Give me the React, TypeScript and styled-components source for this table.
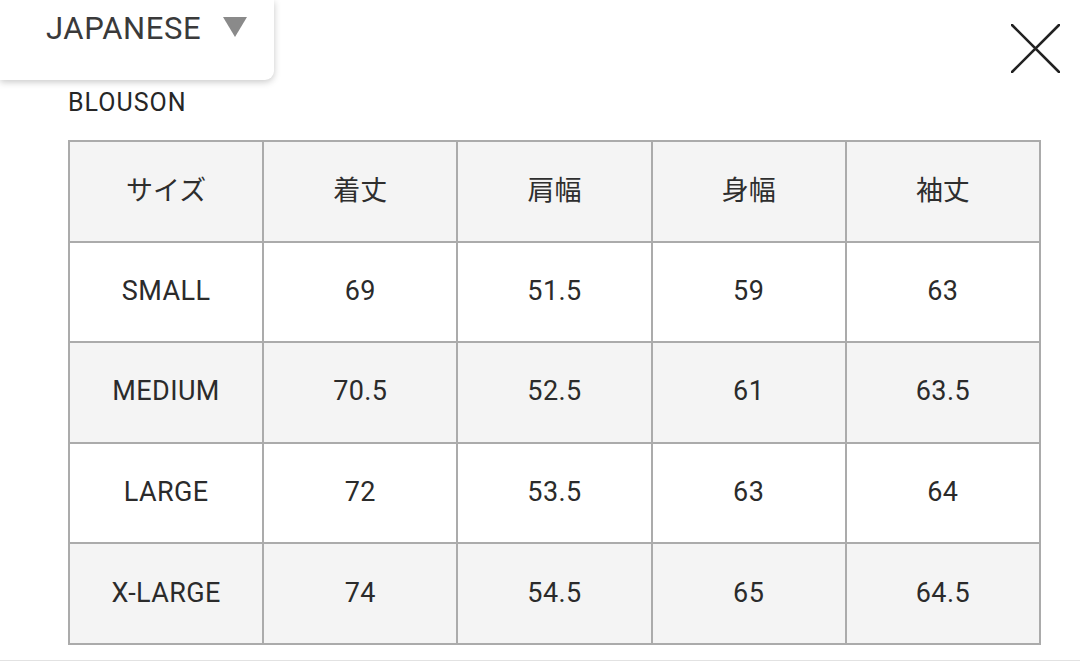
import React from "react";
import styled, { createGlobalStyle } from "styled-components";

const GlobalStyle = createGlobalStyle`
  html, body {
    margin: 0;
    padding: 0;
    background: #fff;
  }
  body {
    font-family: Roboto, "Noto Sans CJK JP", sans-serif;
    color: #333;
  }
`;

const headers = ["サイズ", "着丈", "肩幅", "身幅", "袖丈"];
const rows = [
  ["SMALL", "69", "51.5", "59", "63"],
  ["MEDIUM", "70.5", "52.5", "61", "63.5"],
  ["LARGE", "72", "53.5", "63", "64"],
  ["X-LARGE", "74", "54.5", "65", "64.5"],
];

export default function App() {
  return (
    <>
      <GlobalStyle />
      <Page>
        <TopBar>
          <LangSelect>
            <LangLabel>JAPANESE</LangLabel>
            <Caret />
          </LangSelect>
          <CloseButton aria-label="close">
            <svg width="49" height="49" viewBox="0 0 49 49">
              <path
                d="M1 1 L48 48 M48 1 L1 48"
                stroke="#222"
                strokeWidth="2.6"
                strokeLinecap="round"
              />
            </svg>
          </CloseButton>
        </TopBar>
        <Content>
          <Title>BLOUSON</Title>
          <SizeTable>
            <thead>
              <tr>
                {headers.map((h) => (
                  <HeadCell key={h}>{h}</HeadCell>
                ))}
              </tr>
            </thead>
            <tbody>
              {rows.map((r, i) => (
                <Row key={r[0]} $shaded={i % 2 === 1}>
                  {r.map((c, j) => (
                    <Cell key={j}>{c}</Cell>
                  ))}
                </Row>
              ))}
            </tbody>
          </SizeTable>
        </Content>
        <Divider />
      </Page>
    </>
  );
}

const Page = styled.div`
  width: 1080px;
  height: 661px;
  overflow: hidden;
`;

const TopBar = styled.div`
  display: flex;
  justify-content: space-between;
  align-items: flex-start;
`;

const LangSelect = styled.div`
  width: 274px;
  height: 80px;
  box-sizing: border-box;
  padding: 11px 0 0 46px;
  display: flex;
  align-items: flex-start;
  gap: 22px;
  background: #fff;
  border-radius: 0 0 9px 0;
  box-shadow: 0 2px 7px rgba(0, 0, 0, 0.22);
`;

const LangLabel = styled.span`
  font-size: 31px;
  line-height: 36px;
  color: #3a3a3a;
  letter-spacing: 0.6px;
`;

const Caret = styled.span`
  margin-top: 6px;
  width: 0;
  height: 0;
  border-left: 12px solid transparent;
  border-right: 12px solid transparent;
  border-top: 20px solid #8a8a8a;
`;

const CloseButton = styled.button`
  margin: 24px 20px 0 0;
  padding: 0;
  border: none;
  background: none;
  display: flex;
`;

const Content = styled.div`
  padding: 9px 39px 0 68px;
`;

const Title = styled.div`
  font-size: 25px;
  line-height: 28px;
  color: #262626;
  letter-spacing: 1px;
  height: 28px;
`;

const SizeTable = styled.table`
  margin-top: 23px;
  width: 973px;
  border-collapse: collapse;
  border: 2px solid #ababab;
`;

const HeadCell = styled.th`
  height: 93.6px;
  padding: 0 0 5px;
  border: 2px solid #ababab;
  background: #f4f4f4;
  font-weight: 400;
  font-size: 27px;
  color: #2e2e2e;
  text-align: center;
  width: 20%;
`;

const Row = styled.tr<{ $shaded: boolean }>`
  background: ${(p) => (p.$shaded ? "#f4f4f4" : "#fff")};
`;

const Cell = styled.td`
  height: 96.6px;
  padding: 0 0 2px;
  border: 2px solid #ababab;
  font-size: 27px;
  letter-spacing: 0.4px;
  color: #2b2b2b;
  text-align: center;
`;

const Divider = styled.div`
  margin-top: 15px;
  height: 1px;
  background: #e2e2e2;
`;
